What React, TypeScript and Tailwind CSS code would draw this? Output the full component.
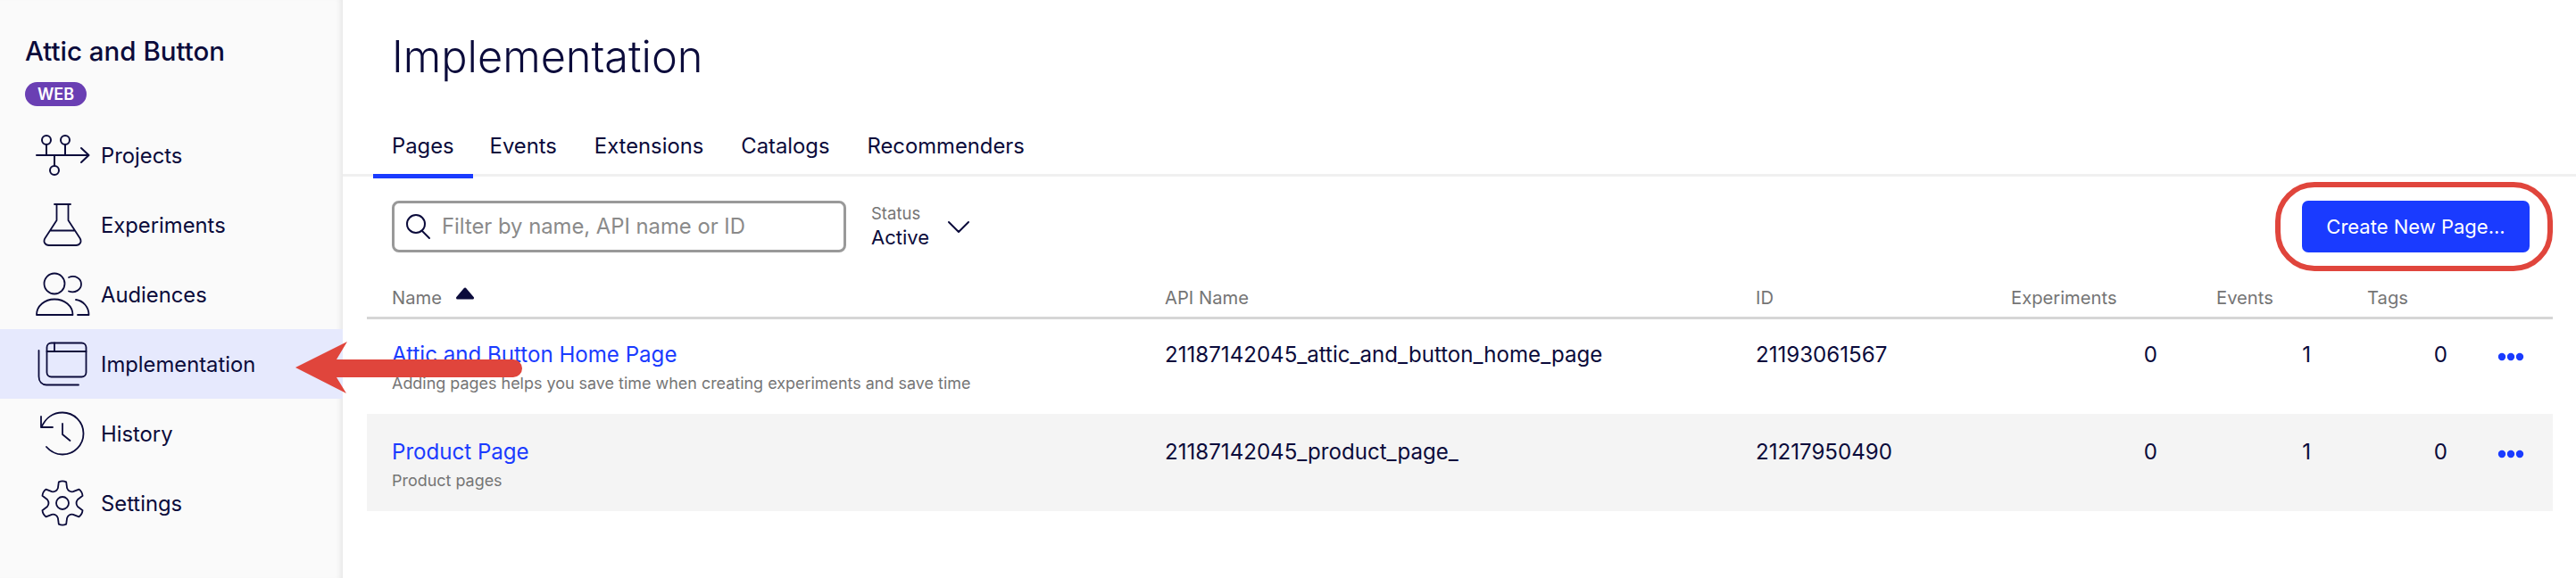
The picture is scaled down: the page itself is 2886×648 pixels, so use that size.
const ink = "#0b0b3b";

const gearPath = () => {
  const cx = 70, cy = 564, rOut = 24, rIn = 17.5;
  const pt = (r: number, deg: number) => {
    const a = (deg * Math.PI) / 180;
    return `${(cx + r * Math.cos(a)).toFixed(2)} ${(cy + r * Math.sin(a)).toFixed(2)}`;
  };
  let d = "";
  for (let i = 0; i < 6; i++) {
    const a = -90 + i * 60;
    d += i === 0 ? `M${pt(rIn, a - 17)}` : `Q${pt(rIn - 3.5, a - 30)} ${pt(rIn, a - 17)}`;
    d += `L${pt(rOut, a - 10)}Q${pt(rOut + 1.5, a)} ${pt(rOut, a + 10)}L${pt(rIn, a + 17)}`;
  }
  d += `Q${pt(rIn - 3.5, -120)} ${pt(rIn, -107)}Z`;
  return d;
};

const ProjectsIcon = () => (
  <svg width="64" height="50" viewBox="38 149 64 50" fill="none" stroke={ink} strokeWidth="2" strokeLinecap="round" strokeLinejoin="round">
    <path d="M41 174H99M91 166l8.5 8-8.5 8" />
    <circle cx="52" cy="157" r="5" />
    <circle cx="73" cy="157" r="5" />
    <circle cx="61" cy="191" r="5" />
    <path d="M52 162v12M73 162v12M61 174v12" />
  </svg>
);

const FlaskIcon = () => (
  <svg width="64" height="52" viewBox="38 226 64 52" fill="none" stroke={ink} strokeWidth="1.800" strokeLinecap="round" strokeLinejoin="round">
    <path d="M61 229H79M63.500 229V247L50.500 267C48 271 50.500 275 55 275H85C89.500 275 92 271 89.500 267L76.500 247V229M56.500 258.500H83.500" />
  </svg>
);

const AudienceIcon = () => (
  <svg width="64" height="52" viewBox="38 304 64 52" fill="none" stroke={ink} strokeWidth="1.800" strokeLinecap="round" strokeLinejoin="round">
    <circle cx="61" cy="318" r="11.500" />
    <path d="M77 311C84 308 91 312 91 318.500C91 325 84 329 77 326.500" />
    <path d="M41 353C41 343 50 335.500 61 335.500C72.500 335.500 81.500 343 81.500 353Z" />
    <path d="M85 336C93 337 99.500 344 99.500 353H87" />
  </svg>
);

const WindowIcon = () => (
  <svg width="64" height="52" viewBox="38 382 64 52" fill="none" stroke={ink} strokeWidth="1.800" strokeLinecap="round" strokeLinejoin="round">
    <rect x="52.500" y="384.500" width="44" height="38" rx="5" />
    <path d="M52.500 394H96.500M61 384.500V394" />
    <path d="M43.500 393V422C43.500 428 47 431.500 52 431.500H88" />
  </svg>
);

const HistoryIcon = () => (
  <svg width="64" height="52" viewBox="38 460 64 52" fill="none" stroke={ink} strokeWidth="1.800" strokeLinecap="round" strokeLinejoin="round">
    <path d="M46.500 479C51 468 60 462.500 70 462.500C83 462.500 93.500 473 93.500 486C93.500 499 83 509.500 70 509.500C63 509.500 56.500 506 52 501" />
    <path d="M46 467V479H59M70 475V487L78.500 494" />
  </svg>
);

const GearIcon = () => (
  <svg width="64" height="52" viewBox="38 538 64 52" fill="none" stroke={ink} strokeWidth="1.800" strokeLinecap="round" strokeLinejoin="round">
    <path d={gearPath()} />
    <circle cx="70" cy="564" r="7" />
  </svg>
);

const navItems = [
  { name: "Projects", Icon: ProjectsIcon },
  { name: "Experiments", Icon: FlaskIcon },
  { name: "Audiences", Icon: AudienceIcon },
  { name: "Implementation", Icon: WindowIcon, active: true },
  { name: "History", Icon: HistoryIcon },
  { name: "Settings", Icon: GearIcon },
];

const tabs = ["Pages", "Events", "Extensions", "Catalogs", "Recommenders"];

const rows = [
  {
    name: "Attic and Button Home Page",
    desc: "Adding pages helps you save time when creating experiments and save time",
    api: "21187142045_attic_and_button_home_page",
    id: "21193061567",
  },
  {
    name: "Product Page",
    desc: "Product pages",
    api: "21187142045_product_page_",
    id: "21217950490",
    shaded: true,
  },
];

const cols = "grid grid-cols-[866px_662px_286px_230px_169px_138px_70px]";

const Sidebar = () => (
  <aside className="w-[384px] h-full shrink-0 bg-[#fafafa] shadow-[inset_-7px_0_7px_-5px_rgba(0,0,0,0.09)]">
    <div className="pl-[28px] pt-[38px] h-[135px]">
      <div className="text-[29.500px] leading-[38px] font-medium text-[#0b0b3b]">Attic and Button</div>
      <div className="mt-[16px] w-[69px] h-[27px] rounded-full bg-[#6a3fb3] text-white text-[18px] font-semibold flex items-center justify-center">
        WEB
      </div>
    </div>
    {navItems.map(({ name, Icon, active }) => (
      <div
        key={name}
        className={`h-[78px] flex items-center pl-[38px] text-[23.800px] text-[#0b0b3b] ${active ? "bg-[#e6e9fd]" : ""}`}
      >
        <Icon />
        <span className="ml-[11px] pt-[2px]">{name}</span>
      </div>
    ))}
  </aside>
);

const Toolbar = () => (
  <div className="flex items-start pt-[27px] pl-[55px] pr-[52px] justify-between h-[85px]">
    <div className="flex items-start">
      <div className="w-[509px] h-[58px] border-[3px] border-[#999999] rounded-[8px] flex items-center pl-[11px]">
        <svg width="30" height="30" viewBox="0 0 30 30" fill="none" stroke={ink} strokeWidth="2" strokeLinecap="round">
          <circle cx="13" cy="12" r="10" />
          <path d="M20 20l8 8" />
        </svg>
        <span className="ml-[12px] text-[23.800px] text-[#8a8a8a]">Filter by name, API name or ID</span>
      </div>
      <div className="ml-[28px] flex items-center">
        <div className="w-[65px]">
          <div className="text-[18.500px] leading-[24px] text-[#757575] mt-[2px]">Status</div>
          <div className="text-[22px] leading-[30px] text-[#0b0b3b]">Active</div>
        </div>
        <svg className="ml-[20px] mt-[4px]" width="26" height="16" viewBox="0 0 26 16" fill="none" stroke={ink} strokeWidth="2" strokeLinecap="round" strokeLinejoin="round">
          <path d="M2 2l11 11 11-11" />
        </svg>
      </div>
    </div>
    <button className="w-[255px] h-[58px] rounded-[7px] bg-[#1a3bff] text-white text-[22px]">Create New Page...</button>
  </div>
);

const Dots = () => (
  <svg width="30" height="10" viewBox="0 0 30 10" fill="#1a3bff">
    <circle cx="5" cy="5" r="4.200" />
    <circle cx="15" cy="5" r="4.200" />
    <circle cx="25" cy="5" r="4.200" />
  </svg>
);

const Table = () => (
  <div className="ml-[27px] mr-[26px]">
    <div className={`${cols} pl-[28px] h-[75px] border-b-[3px] border-[#d6d6d6] items-center text-[20.200px] text-[#757575] pt-[30px]`}>
      <div className="flex items-center">
        Name
        <svg className="ml-[15px] mb-[9px]" width="22" height="14" viewBox="0 0 22 14" fill={ink} stroke={ink} strokeWidth="3" strokeLinejoin="round">
          <path d="M11 2L19.500 12H2.500Z" />
        </svg>
      </div>
      <div>API Name</div>
      <div>ID</div>
      <div>Experiments</div>
      <div>Events</div>
      <div>Tags</div>
      <div />
    </div>
    {rows.map((r) => (
      <div
        key={r.id}
        className={`${cols} pl-[28px] ${r.shaded ? "h-[109px] pt-[27px] bg-[#f4f4f4]" : "h-[106px] pt-[24px]"} text-[24.100px] leading-[32px] text-[#0b0b3b]`}
      >
        <div>
          <div className="text-[#1a3bff]">{r.name}</div>
          <div className="mt-[2px] text-[17.950px] leading-[28px] text-[#757575]">{r.desc}</div>
        </div>
        <div>{r.api}</div>
        <div>{r.id}</div>
        <div className="text-right pr-[66px]">0</div>
        <div className="text-right pr-[63px]">1</div>
        <div className="text-right pr-[48px]">0</div>
        <div className="pl-[8px] pt-[13px]">
          <Dots />
        </div>
      </div>
    ))}
  </div>
);

export default function App() {
  return (
    <div className="relative w-[2886px] h-[648px] overflow-hidden bg-white flex font-['Inter',sans-serif]">
      <Sidebar />
      <main className="flex-1">
        <div className="h-[132px] pl-[55px] pt-[29px] text-[48.700px] leading-[70px] font-light text-[#0b0b3b]">Implementation</div>
        <div className="h-[66px] border-b-[3px] border-[#f0f0f0] pl-[34px] flex">
          {tabs.map((t, i) => (
            <div
              key={t}
              className={`h-[68px] px-[21px] first:mr-[-2px] flex items-center text-[23.800px] text-[#0b0b3b] border-b-[5px] ${i === 0 ? "border-[#1a3bff]" : "border-transparent"}`}
            >
              {t}
            </div>
          ))}
        </div>
        <Toolbar />
        <Table />
      </main>
      {/* annotations drawn on top of the screenshot */}
      <div className="absolute left-[2549px] top-[204px] w-[311px] h-[100px] rounded-[44px] border-[6px] border-[#e0453c]" />
      <svg className="absolute left-[325px] top-[378px]" width="270" height="68" viewBox="325 378 270 68" fill="#e0453c">
        <path d="M331 412L389 383L377 403H575A10 10 0 0 1 575 423H377L388 441Z" />
      </svg>
    </div>
  );
}
